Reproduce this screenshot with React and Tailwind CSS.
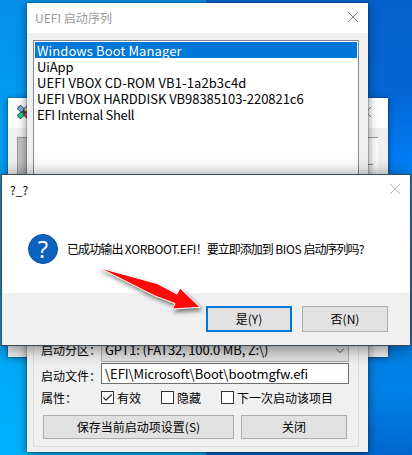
import React from "react";

function Cross({ className }) {
  return (
    <svg viewBox="0 0 10 10" className={className} fill="none" stroke="currentColor" strokeWidth="0.9">
      <path d="M0 0 10 10M10 0 0 10" />
    </svg>
  );
}

function Line({ children, className = "" }) {
  return <div className={"h-4 whitespace-nowrap pl-[2px] leading-[18px] " + className}>{children}</div>;
}

function Check({ checked, label, className = "" }) {
  return (
    <div className={"flex items-center gap-[3px] whitespace-nowrap " + className}>
      <span className="flex size-[13px] shrink-0 items-center justify-center border border-[#333] bg-white">
        {checked && (
          <svg viewBox="0 0 11 11" className="size-[11px]" fill="none" stroke="#222" strokeWidth="1.2">
            <path d="M1.3 5.4 4 8.2 9.7 2.5" />
          </svg>
        )}
      </span>
      <span className="pt-px">{label}</span>
    </div>
  );
}

function BackWindow() {
  return (
    <div className="absolute top-[98px] left-[8px] flex h-[259px] w-[380px] flex-col bg-[#f0f0f0] shadow-[0_0_1px_#123,0_1px_7px_rgba(0,0,0,0.4)]">
      <div className="flex h-[30px] shrink-0 items-center justify-between bg-white pr-[17px] pl-[9px]">
        <svg viewBox="0 0 14 14" className="mb-[2px] size-[14px]" stroke="#222" strokeWidth="0.8">
          <path d="M7 7 3.500 6.500 .5 4 1.500 1.500 4 .5 7 3.500Z" fill="#65b5f5" />
          <path d="M7 7 7 3.500 10 .5 12.500 1.500 13.500 4 10.500 6.500Z" fill="#ffc36b" />
          <path d="M7 7 7 10.500 4 13.500 1.500 12.500 .5 10 3.500 7.500Z" fill="#10d68d" />
          <path d="M7 7 10.500 7.500 13.500 10 12.500 12.500 10 13.500 7 10.500Z" fill="#ee3d4a" />
        </svg>
        <Cross className="mb-[2px] size-[10px] text-[#777]" />
      </div>
      <div className="mr-[10px] ml-[9px] mt-[9px] flex h-[200px] justify-between border-t border-[#999]">
        <div className="w-10 border-l border-[#999] bg-[#c3c3c3]" />
        <div className="flex w-5 flex-col bg-[#fafafa] pt-[26px] pr-[5px]">
          <div className="h-px bg-[#888]" />
        </div>
      </div>
      <div className="mx-[11px] mt-[8px] h-px bg-[#999]" />
    </div>
  );
}

function BootWindow() {
  return (
    <div className="absolute top-[3px] left-[27px] flex h-[449px] w-[341px] flex-col bg-[#f0f0f0] shadow-[0_0_1px_#123,0_2px_9px_rgba(0,0,0,0.5)]">
      <div className="flex h-[30px] shrink-0 items-center justify-between bg-white pr-[10px] pl-[8px] text-[12px] text-[#999]">
        <span className="mb-px tracking-[0.05px]">UEFI 启动序列</span>
        <Cross className="mb-[2px] size-[10px] text-[#777]" />
      </div>
      <div className="mt-[7px] ml-[6px] h-[200px] w-[326px] shrink-0 border border-[#828790] bg-white p-px text-[13px]">
        <Line className="bg-[#0078d7] tracking-[0.1px] text-white">Windows Boot Manager</Line>
        <Line className="tracking-[-0.1px]">UiApp</Line>
        <Line className="tracking-[0.1px]">UEFI VBOX CD-ROM VB1-1a2b3c4d</Line>
        <Line className="tracking-[-0.05px]">UEFI VBOX HARDDISK VB98385103-220821c6</Line>
        <Line className="tracking-[-0.28px]">EFI Internal Shell</Line>
      </div>
      <div className="mt-[60px] mr-[9px] ml-[6px] flex h-[147px] shrink-0 flex-col border border-[#dcdcdc] px-[7px] pt-[37px] text-[12px]">
        <div className="flex h-[24px] shrink-0 items-center">
          <span className="w-[60px] shrink-0">启动分区：</span>
          <div className="flex h-6 w-[248px] shrink-0 items-center justify-between border border-[#adadad] bg-[#e1e1e1] pr-1 pl-[3px] text-[13px] tracking-[-0.14px]">
            <span className="whitespace-nowrap">GPT1: (FAT32, 100.0 MB, Z:\)</span>
            <svg viewBox="0 0 8 5" className="h-[5px] w-2" fill="none" stroke="#555">
              <path d="M0 .5 4 4.500 8 .5" />
            </svg>
          </div>
        </div>
        <div className="mt-px flex h-[21px] shrink-0 items-center">
          <span className="w-[60px] shrink-0 pt-[5px]">启动文件：</span>
          <div className="flex h-[21px] w-[248px] shrink-0 items-center border border-[#707070] bg-white pl-[3px] text-[13px] tracking-[-0.06px]">
            \EFI\Microsoft\Boot\bootmgfw.efi
          </div>
        </div>
        <div className="mt-[6px] flex h-[14px] shrink-0 items-center">
          <span className="w-[60px] pt-px">属性：</span>
          <Check checked label="有效" className="w-[60px]" />
          <Check label="隐藏" className="w-[60px]" />
          <Check label="下一次启动该项目" />
        </div>
        <div className="mt-[11px] ml-[2px] flex gap-[7px]">
          <button className="h-6 w-[191px] shrink-0 border border-[#adadad] bg-[#e1e1e1] whitespace-nowrap">保存当前启动项设置(S)</button>
          <button className="h-6 w-[106px] shrink-0 border border-[#adadad] bg-[#e1e1e1]">关闭</button>
        </div>
      </div>
    </div>
  );
}

function Prompt() {
  return (
    <div className="absolute top-[174px] left-[1px] flex h-[172px] w-[410px] flex-col border border-[#3c4a56] bg-white shadow-[0_2px_16px_rgba(0,0,0,0.5)]">
      <div className="flex h-[30px] items-center justify-between pr-[10px] pl-2 text-[12px]">
        <span>?_?</span>
        <Cross className="mb-[2px] size-[10px] text-[#aaa]" />
      </div>
      <div className="flex flex-1 items-center pl-[26px] text-[12px]">
        <div className="flex size-[30px] items-center justify-center rounded-full border border-[#064e9c] bg-[#0c62bf] pb-px font-['Open_Sans',sans-serif] text-[24px] leading-none text-white">?</div>
        <span className="ml-[9px] whitespace-nowrap tracking-[-0.35px]">
          <span className="tracking-[-0.9px]">已成功输出</span> XORBOOT.EFI
          <span className="tracking-[-1px]">！要立即添加到</span> BIOS <span className="tracking-[-1px]">启动序列吗</span>?
        </span>
      </div>
      <div className="flex h-[52px] justify-end gap-[10px] bg-[#f0f0f0] pt-[13px] pr-[22px] text-[12px]">
        <button className="h-[26px] w-[86px] border-2 border-[#0078d7] bg-[#e1e1e1]">是(Y)</button>
        <button className="h-[26px] w-[86px] border border-[#adadad] bg-[#e1e1e1]">否(N)</button>
      </div>
    </div>
  );
}

export default function App() {
  return (
    <div className="relative flex h-[455px] w-[412px] overflow-hidden bg-[#0078d7] font-['Noto_Sans_CJK_SC',sans-serif] text-black">
      <div className="flex-1 bg-[linear-gradient(180deg,#0590e8,#009bf0_25%,#00a6f6_70%,#00b0fa)]" />
      <div className="flex-1 bg-[linear-gradient(180deg,#0560cb,#0466d4_20%,#007cf4_35%,#0090fa_41%,#0078e0_60%,#0082e8_86%,#0066cf)]" />
      <BackWindow />
      <BootWindow />
      <Prompt />
      <svg viewBox="0 0 112 50" className="absolute top-[265px] left-[97px] h-[50px] w-[112px] drop-shadow-[2px_3px_2px_rgba(0,0,0,0.5)]">
        <path d="M1.500 2.500 60 18.500 80 29 83 23 103 42.300 75.500 44 78 38.500 58 31Z" fill="#ff0808" stroke="#fff" strokeWidth="1" />
      </svg>
    </div>
  );
}
